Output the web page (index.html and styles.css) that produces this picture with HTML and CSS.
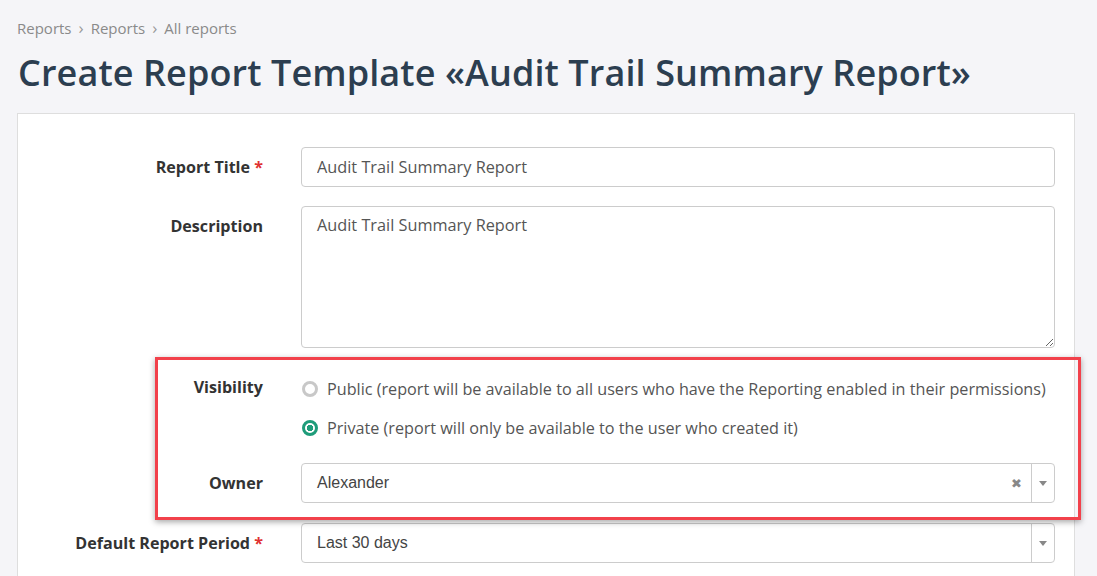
FILE: index.html
```html
<!DOCTYPE html>
<html lang="en">
<head>
<meta charset="utf-8">
<title>Create Report Template</title>
<link rel="stylesheet" href="styles.css">
</head>
<body>
<div class="page">
  <nav class="crumbs">
    <a href="#">Reports</a>
    <span class="sep">&#8250;</span>
    <a href="#">Reports</a>
    <span class="sep">&#8250;</span>
    <a href="#">All reports</a>
  </nav>
  <h1 class="title">Create Report Template «Audit Trail Summary Report»</h1>

  <form class="card">
    <div class="row">
      <label class="label">Report Title <span class="req">*</span></label>
      <div class="field"><input class="input" type="text" value="Audit Trail Summary Report"></div>
    </div>
    <div class="row row-desc">
      <label class="label">Description</label>
      <div class="field"><textarea class="input textarea">Audit Trail Summary Report</textarea></div>
    </div>
    <div class="row row-radios">
      <label class="label">Visibility</label>
      <div class="field radios">
        <label class="radio"><span class="dot"></span>Public (report will be available to all users who have the Reporting enabled in their permissions)</label>
        <label class="radio"><span class="dot on"></span>Private (report will only be available to the user who created it)</label>
      </div>
    </div>
    <div class="row">
      <label class="label">Owner</label>
      <div class="field">
        <div class="select">
          <span class="select-value">Alexander</span>
          <span class="select-clear">&#10006;</span>
          <span class="select-arrow"><svg width="8" height="5" viewBox="0 0 8 5"><path d="M0 0h8L4 5z" fill="#888"/></svg></span>
        </div>
      </div>
    </div>
    <div class="row">
      <label class="label">Default Report Period <span class="req">*</span></label>
      <div class="field">
        <div class="select">
          <span class="select-value">Last 30 days</span>
          <span class="select-arrow"><svg width="8" height="5" viewBox="0 0 8 5"><path d="M0 0h8L4 5z" fill="#888"/></svg></span>
        </div>
      </div>
    </div>
    <div class="highlight"></div>
  </form>
</div>
</body>
</html>
```

FILE: styles.css
```css
* { box-sizing: border-box; }

html, body {
  margin: 0;
  background: #f5f5f8;
  font-family: "Open Sans", "Liberation Sans", sans-serif;
  color: #333;
}

.page {
  padding: 17px 22px 0 17px;
}

.crumbs {
  display: flex;
  align-items: center;
  gap: 7px;
  font-size: 15px;
  line-height: 22px;
  color: #8a8a8a;
}

.crumbs a {
  color: #8a8a8a;
  text-decoration: none;
}

.crumbs .sep {
  color: #9a9a9a;
  font-size: 17px;
}

.title {
  margin: 9px 0 0 1px;
  font-size: 36px;
  line-height: 50px;
  font-weight: 600;
  color: #2c3e50;
  letter-spacing: 0.1px;
}

.card {
  position: relative;
  margin-top: 15px;
  background: #fff;
  border: 1px solid #dedede;
  padding: 33px 19px 40px 0;
  display: flex;
  flex-direction: column;
  gap: 20px;
}

.row {
  display: grid;
  grid-template-columns: 245px 1fr;
  column-gap: 38px;
  align-items: start;
}

.row-desc { margin-top: -1px; }

.label {
  text-align: right;
  font-weight: 700;
  font-size: 16.1px;
  line-height: 20px;
  padding-top: 10px;
  color: #333;
}

.req { color: #e03131; }

.input {
  display: block;
  width: 100%;
  height: 40px;
  border: 1px solid #ccc;
  border-radius: 4px;
  padding: 0 15px;
  font-family: "Open Sans", "Liberation Sans", sans-serif;
  font-size: 16.3px;
  color: #555;
  background: #fff;
}

.textarea {
  height: 142px;
  padding-top: 7px;
  resize: vertical;
  line-height: 22px;
}

.row-radios .label { padding-top: 9px; }

.radios {
  display: flex;
  flex-direction: column;
  gap: 17px;
  padding-top: 10px;
  margin-bottom: 4px;
}

.radio {
  display: flex;
  align-items: center;
  gap: 9px;
  font-size: 16.2px;
  line-height: 22px;
  color: #555;
  padding-left: 1px;
}

.dot {
  width: 16px;
  height: 16px;
  border-radius: 50%;
  border: 3px solid #c8c8c8;
  background: #fff;
  flex: none;
}

.dot.on {
  border-color: #1f9c7a;
  background: radial-gradient(circle, #1f9c7a 0 3px, #fff 3.5px);
}

.select {
  display: flex;
  align-items: center;
  height: 40px;
  border: 1px solid #ccc;
  border-radius: 4px;
  background: #fff;
}

.select-value {
  flex: 1;
  padding-left: 15px;
  font-family: "Liberation Sans", Arial, sans-serif;
  font-size: 16px;
  color: #444;
}

.select-clear {
  width: 30px;
  text-align: center;
  font-size: 13px;
  color: #888;
}

.select-arrow {
  width: 23px;
  align-self: stretch;
  display: flex;
  align-items: center;
  justify-content: center;
  border-left: 1px solid #ccc;
}

.highlight {
  position: absolute;
  left: 137px;
  top: 243px;
  width: 926px;
  height: 163px;
  border: 3px solid #f2414b;
  box-shadow: 0 2px 6px rgba(0, 0, 0, 0.35);
  pointer-events: none;
}
```
